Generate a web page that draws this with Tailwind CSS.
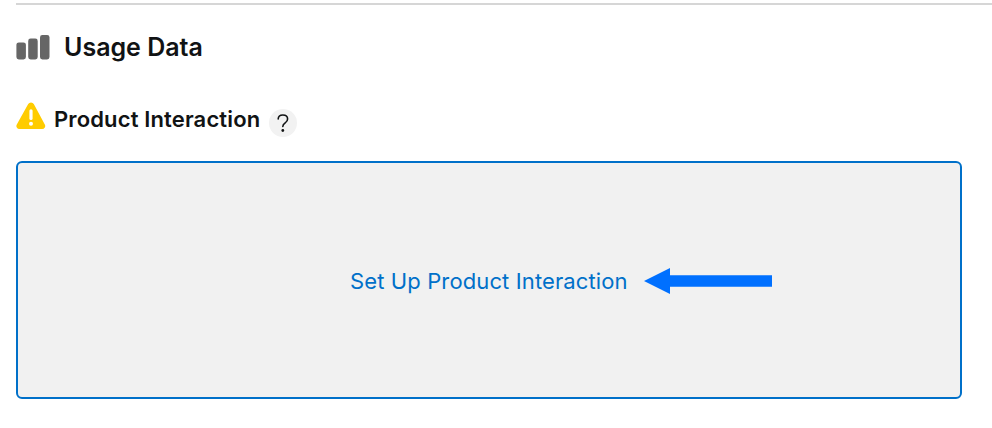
<!DOCTYPE html>
<html lang="en">
<head>
    <meta charset="UTF-8">
    <meta name="viewport" content="width=device-width, initial-scale=1.0">
    <title>Usage Data</title>
    <script src="https://cdn.jsdelivr.net/npm/@tailwindcss/browser@4"></script>
</head>
<body class="bg-white font-['Inter',sans-serif] text-[#111314] overflow-hidden">

    <section class="pl-4 pt-[3px]">
        <div class="h-0.5 bg-[#d6d6d6]"></div>

        <div class="flex items-center h-8 mt-[26px]">
            <svg class="w-[34px] h-[25px] shrink-0" viewBox="0 0 34 25" fill="#666666">
                <rect x="0.4" y="7.4" width="9.5" height="17" rx="2.4" />
                <rect x="12.2" y="3.6" width="9.5" height="20.8" rx="2.4" />
                <rect x="24" y="0" width="9.5" height="24.4" rx="2.4" />
            </svg>
            <h2 class="ml-3.5 mt-0.5 text-[25px] font-semibold whitespace-nowrap">Usage Data</h2>
        </div>

        <div class="flex items-center h-8 mt-10">
            <svg class="w-[30px] h-7 shrink-0 mb-1.5" viewBox="0 0 30 28">
                <path d="M12.2 2.1a3.2 3.2 0 0 1 5.6 0L28.8 22.5a3 3 0 0 1-2.6 4.5H3.4A3 3 0 0 1 .8 22.5Z" fill="#ffcc00" />
                <path d="M15 8.8v7.6" stroke="#fff" stroke-width="3.2" stroke-linecap="round" />
                <circle cx="15" cy="21.8" r="2" fill="#fff" />
            </svg>
            <h3 class="ml-2 text-[22px] font-semibold tracking-[0.14px] whitespace-nowrap">Product Interaction</h3>
            <button type="button" aria-label="Help" class="ml-[9px] mt-2 size-7 shrink-0 rounded-full bg-[#f2f2f2] flex items-center justify-center">
                <svg class="w-3 h-[18px]" viewBox="0 0 12 18" fill="none">
                    <path d="M1.2 5C1.3 2.5 3.1 1 5.8 1c2.8 0 4.8 1.6 4.8 4 0 1.8-.9 2.8-2.4 3.8-1.8 1.2-2.4 1.8-2.4 3.6" stroke="#111314" stroke-width="1.6" stroke-linecap="round" />
                    <circle cx="5.8" cy="16.5" r="1.4" fill="#111314" />
                </svg>
            </button>
        </div>

        <div class="mt-[26px] w-[946px] h-[238px] flex items-center rounded-md border-2 border-[#0070c9] bg-[#f1f1f1]">
            <a href="#" class="ml-[332px] mt-0.5 text-[22px] tracking-[0.12px] text-[#0070c9] whitespace-nowrap">Set Up Product Interaction</a>
            <svg class="ml-4 mt-0.5 w-32 h-[26px] shrink-0" viewBox="0 0 128 26">
                <path d="M0 13 26 0V7.3H128V18.7H26V26Z" fill="#0070ff" />
            </svg>
        </div>
    </section>

</body>
</html>
